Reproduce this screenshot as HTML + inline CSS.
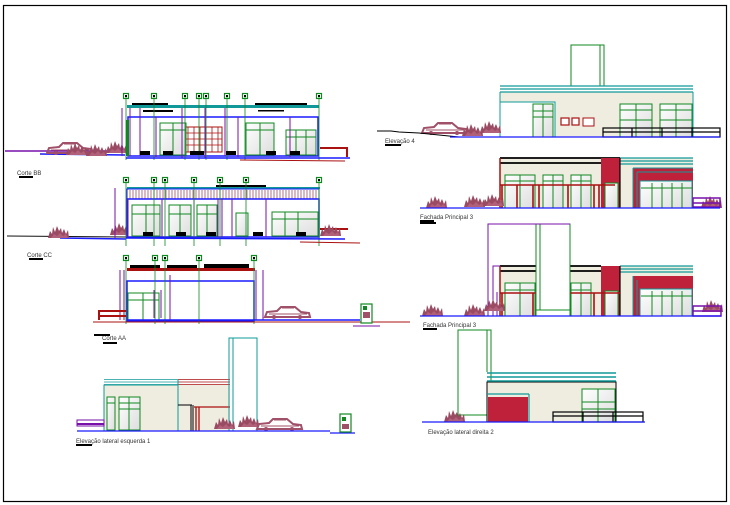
<!DOCTYPE html>
<html><head><meta charset="utf-8"><style>
html,body{margin:0;padding:0;background:#fff;width:730px;height:505px;overflow:hidden}
svg{display:block}
text{font-family:"Liberation Sans",sans-serif;font-size:6px;fill:#333}
</style></head><body>
<svg width="730" height="505" viewBox="0 0 730 505" xmlns="http://www.w3.org/2000/svg">
<defs>
<linearGradient id="g" x1="0" y1="0" x2="1" y2="1"><stop offset="0" stop-color="#fff"/><stop offset="1" stop-color="#ddd"/></linearGradient>
<g id="shrub"><path d="M-2 12 L0 5 L2 8 L3 1 L5 6 L7 0 L9 5 L11 2 L12 7 L14 3 L16 8 L18 4 L19 12 Z" fill="#9a4a62"/><path d="M1 12 L4 8 L7 10 L10 7 L13 10 L16 8 L18 12Z" fill="#b06078"/></g>
<g id="car"><path d="M0 12 L2 7 L12 6 L16 2 L30 2 L36 7 L44 8 L45 12 Z" fill="none" stroke="#a05068" stroke-width="2"/><path d="M17 3h12M4 9h38" stroke="#a05068"/><circle cx="9" cy="12" r="2" fill="#a05068"/><circle cx="35" cy="12" r="2" fill="#a05068"/></g>
<g id="axis"><rect x="-2.5" y="-2.5" width="5" height="5" fill="none" stroke="#118822" stroke-width="1.2"/><rect x="-1" y="-1" width="2" height="2" fill="#000"/></g>
</defs>
<rect x="3.5" y="5.5" width="723" height="496" fill="none" stroke="#000" stroke-width="1.2"/>

<!-- ========== Corte BB ========== -->
<g>
<line x1="5" y1="151" x2="125" y2="151" stroke="#7711aa" stroke-width="1.5"/>
<line x1="40" y1="154" x2="125" y2="155" stroke="#1a1aff" stroke-width="1.5"/>
<use href="#car" x="47" y="141"/>
<use href="#shrub" x="68" y="143"/><use href="#shrub" x="88" y="144"/><use href="#shrub" x="108" y="141"/>
<rect x="127" y="105" width="192" height="3" fill="#119999"/>
<rect x="128" y="117" width="190" height="39" fill="#fff" stroke="#1a1aff" stroke-width="1.5"/>
<rect x="132" y="103" width="36" height="2" fill="#000"/><rect x="255" y="103" width="52" height="2" fill="#000"/>
<rect x="143" y="110" width="30" height="2" fill="#000"/><rect x="258" y="110" width="26" height="1.5" fill="#000"/>
<rect x="186" y="127" width="36" height="25" fill="#fff" stroke="#aa1111" stroke-width="1"/>
<path d="M188 127v25M194 127v25M200 127v25M206 127v25M212 127v25M218 127v25M186 133h36M186 139h36M186 145h36" stroke="#aa1111" stroke-width="0.8"/>
<rect x="160" y="123" width="26" height="32" fill="url(#g)" stroke="#118822"/>
<path d="M173 123v32M160 130h26" stroke="#118822"/>
<rect x="246" y="123" width="28" height="32" fill="url(#g)" stroke="#118822"/>
<rect x="286" y="130" width="30" height="25" fill="url(#g)" stroke="#118822"/>
<path d="M260 123v32M246 130h28M296 130v25M306 130v25M286 137h30" stroke="#118822"/>
<rect x="126" y="120" width="3" height="36" fill="#118822"/>
<path d="M122 108v48M130 108v48M140 108v48M156 117v40M182 108v50M205 108v50M225 108v48M238 117v40M290 117v40" stroke="#7711aa" stroke-width="1"/>
<path d="M126 96v64M154 96v64M185 96v64M199 96v64M206 96v64M227 96v64M245 96v64M319 96v64" stroke="#118822" stroke-width="0.8"/>
<use href="#axis" x="126" y="96"/><use href="#axis" x="154" y="96"/><use href="#axis" x="185" y="96"/><use href="#axis" x="199" y="96"/><use href="#axis" x="206" y="96"/><use href="#axis" x="227" y="96"/><use href="#axis" x="245" y="96"/><use href="#axis" x="319" y="96"/>
<rect x="320" y="147" width="28" height="2" fill="#aa1111"/><rect x="346" y="147" width="2" height="10" fill="#aa1111"/>
<line x1="126" y1="158" x2="350" y2="158" stroke="#1a1aff" stroke-width="1.5"/>
<line x1="240" y1="160" x2="345" y2="161" stroke="#aa1111" stroke-width="1"/>
<rect x="140" y="151" width="10" height="4" fill="#000"/><rect x="163" y="151" width="10" height="4" fill="#000"/><rect x="190" y="151" width="14" height="4" fill="#000"/><rect x="226" y="151" width="10" height="4" fill="#000"/><rect x="266" y="151" width="10" height="4" fill="#000"/><rect x="290" y="151" width="10" height="4" fill="#000"/>
<text x="17" y="175">Corte BB</text><rect x="19" y="176" width="14" height="2" fill="#000"/>
</g>

<!-- ========== Corte CC ========== -->
<g>
<line x1="7" y1="236" x2="126" y2="237" stroke="#111" stroke-width="1"/>
<line x1="60" y1="238" x2="126" y2="239" stroke="#1a1aff" stroke-width="1.5"/>
<use href="#shrub" x="50" y="226"/><use href="#shrub" x="112" y="223"/>
<rect x="127" y="187" width="193" height="2" fill="#119999"/>
<rect x="127" y="189" width="192" height="10" fill="#fff" stroke="#1a1aff"/>
<g stroke="#a05068" stroke-width="0.8"><path d="M130 190v9M133 190v9M136 190v9M139 190v9M142 190v9M145 190v9M148 190v9M151 190v9M154 190v9M157 190v9M160 190v9M163 190v9M166 190v9M169 190v9M172 190v9M175 190v9M178 190v9M181 190v9M184 190v9M187 190v9M190 190v9M193 190v9M196 190v9M199 190v9M202 190v9M205 190v9M208 190v9M211 190v9M214 190v9M217 190v9M220 190v9M223 190v9M226 190v9M229 190v9M232 190v9M235 190v9M238 190v9M241 190v9M244 190v9M247 190v9M250 190v9M253 190v9M256 190v9M259 190v9M262 190v9M265 190v9M268 190v9M271 190v9M274 190v9M277 190v9M280 190v9M283 190v9M286 190v9M289 190v9M292 190v9M295 190v9M298 190v9M301 190v9M304 190v9M307 190v9M310 190v9M313 190v9M316 190v9"/></g>
<rect x="216" y="185" width="50" height="2" fill="#000"/>
<rect x="127" y="199" width="192" height="38" fill="#fff" stroke="#1a1aff" stroke-width="1.5"/>
<rect x="132" y="205" width="28" height="31" fill="url(#g)" stroke="#118822"/><rect x="169" y="205" width="22" height="31" fill="url(#g)" stroke="#118822"/><rect x="197" y="205" width="20" height="31" fill="url(#g)" stroke="#118822"/>
<rect x="236" y="213" width="12" height="23" fill="url(#g)" stroke="#118822"/><rect x="272" y="212" width="46" height="24" fill="url(#g)" stroke="#118822"/>
<path d="M146 205v31M132 214h28M180 205v31M169 214h22M207 205v31M197 214h20M285 212v24M298 212v24M272 219h46" stroke="#118822"/>
<path d="M115 188v50M128 199v38M162 199v38M194 199v38M218 199v38M222 199v38M232 199v38M266 199v38" stroke="#7711aa"/>
<path d="M126 180v66M154 180v66M165 180v66M194 180v66M220 180v66M246 180v66M319 180v66" stroke="#118822" stroke-width="0.8"/>
<use href="#axis" x="126" y="180"/><use href="#axis" x="154" y="180"/><use href="#axis" x="165" y="180"/><use href="#axis" x="194" y="180"/><use href="#axis" x="220" y="180"/><use href="#axis" x="246" y="180"/><use href="#axis" x="319" y="180"/>
<rect x="320" y="228" width="28" height="2" fill="#aa1111"/><use href="#shrub" x="322" y="224"/>
<line x1="126" y1="238" x2="345" y2="239" stroke="#1a1aff" stroke-width="1.5"/>
<line x1="300" y1="242" x2="360" y2="243" stroke="#aa1111"/>
<rect x="143" y="232" width="10" height="4" fill="#000"/><rect x="176" y="232" width="10" height="4" fill="#000"/><rect x="206" y="232" width="10" height="4" fill="#000"/><rect x="253" y="232" width="10" height="4" fill="#000"/><rect x="296" y="232" width="10" height="4" fill="#000"/>
<text x="27" y="257">Corte CC</text><rect x="29" y="258" width="14" height="2" fill="#000"/>
</g>

<!-- ========== Corte AA ========== -->
<g>
<rect x="127" y="268" width="128" height="3" fill="#aa1111"/>
<rect x="130" y="265" width="30" height="3" fill="#000"/><rect x="167" y="265" width="30" height="3" fill="#000"/><rect x="204" y="264" width="45" height="4" fill="#000"/>
<rect x="127" y="281" width="127" height="40" fill="#fff" stroke="#1a1aff" stroke-width="1.5"/>
<rect x="128" y="293" width="31" height="27" fill="none" stroke="#118822"/><path d="M143 293v27M128 300h31" stroke="#118822"/>
<path d="M120 270v50M124 270v50M170 275v45M256 270v50M263 270v50M154 290v28M161 290v28" stroke="#7711aa"/>
<path d="M126 258v66M155 258v66M165 258v66M199 258v66M254 258v66" stroke="#118822" stroke-width="0.8"/>
<use href="#axis" x="126" y="258"/><use href="#axis" x="155" y="258"/><use href="#axis" x="165" y="258"/><use href="#axis" x="199" y="258"/><use href="#axis" x="254" y="258"/>
<rect x="98" y="310" width="28" height="2" fill="#aa1111"/><rect x="98" y="310" width="2" height="10" fill="#aa1111"/><rect x="100" y="315" width="26" height="2" fill="#aa1111"/>
<line x1="93" y1="322" x2="410" y2="322" stroke="#aa1111"/>
<line x1="127" y1="320" x2="360" y2="320" stroke="#1a1aff" stroke-width="1.5"/>
<use href="#car" x="265" y="305"/>
<rect x="361" y="304" width="11" height="19" fill="#fff" stroke="#118822" stroke-width="1.2"/><rect x="363" y="312" width="7" height="6" fill="#a05068"/><rect x="363" y="306" width="4" height="4" fill="#118822"/>
<line x1="353" y1="326" x2="380" y2="326" stroke="#7711aa"/>
<text x="102" y="340">Corte AA</text><rect x="94" y="334" width="16" height="2" fill="#000"/><rect x="103" y="342" width="14" height="2" fill="#000"/>
</g>

<!-- ========== Elevação lateral esquerda 1 ========== -->
<g>
<rect x="104" y="385" width="74" height="46" fill="#efece0" stroke="#119999"/>
<rect x="178" y="385" width="52" height="46" fill="#efece0"/>
<path d="M104 379.5h74M104 382h74M104 384.5h74" stroke="#119999" stroke-width="0.8"/>
<path d="M178 379.5h52M178 382h52M178 384.5h52" stroke="#aa1111" stroke-width="0.8"/>
<line x1="178" y1="380" x2="178" y2="431" stroke="#119999"/>
<rect x="107" y="397" width="8" height="33" fill="url(#g)" stroke="#118822"/><rect x="119" y="397" width="21" height="33" fill="url(#g)" stroke="#118822"/>
<path d="M129 397v33M107 403h8M119 403h21M119 409h21" stroke="#118822"/>
<path d="M178 405h14M191 405v26M193 405v26" stroke="#000"/>
<path d="M194 407h36M196 407v24M199 407v24" stroke="#aa1111" stroke-width="1.3"/>
<rect x="229" y="338" width="28" height="93" fill="none" stroke="#119999"/><line x1="233" y1="338" x2="233" y2="431" stroke="#119999"/>
<use href="#shrub" x="216" y="417"/><use href="#shrub" x="240" y="415"/>
<use href="#car" x="257" y="417"/>
<rect x="77" y="420" width="27" height="6" fill="none" stroke="#7711aa"/><line x1="77" y1="424" x2="104" y2="424" stroke="#7711aa" stroke-width="2"/>
<line x1="77" y1="431" x2="330" y2="431" stroke="#1a1aff" stroke-width="1.3"/><line x1="330" y1="433" x2="355" y2="433" stroke="#1a1aff" stroke-width="1.3"/>
<rect x="340" y="414" width="11" height="18" fill="#fff" stroke="#118822" stroke-width="1.2"/><rect x="342" y="424" width="7" height="5" fill="#a05068"/><rect x="342" y="417" width="4" height="4" fill="#118822"/>
<text x="76" y="443">Elevação lateral esquerda 1</text><rect x="76" y="444" width="16" height="2" fill="#000"/>
</g>

<!-- ========== Elevação 4 ========== -->
<g>
<rect x="571" y="45" width="33" height="41" fill="#fff" stroke="#118822"/><line x1="600" y1="45" x2="600" y2="86" stroke="#118822"/>
<rect x="500" y="92" width="193" height="45" fill="#efece0"/>
<path d="M500 86h193M500 89h193M500 92h193" stroke="#119999" stroke-width="1.2"/>
<rect x="500" y="102" width="55" height="35" fill="#fff" stroke="#119999"/>
<line x1="500" y1="92" x2="500" y2="137" stroke="#119999"/><line x1="693" y1="92" x2="693" y2="137" stroke="#119999"/>
<rect x="533" y="104" width="20" height="33" fill="url(#g)" stroke="#118822"/><path d="M543 104v33M533 111h20M533 117h20" stroke="#118822"/>
<rect x="620" y="104" width="32" height="33" fill="url(#g)" stroke="#118822"/><rect x="660" y="104" width="32" height="33" fill="url(#g)" stroke="#118822"/>
<path d="M636 104v33M620 110h32M620 120h32M676 104v33M660 110h32M660 120h32" stroke="#118822"/>
<rect x="561" y="118" width="8" height="7" fill="#fff" stroke="#aa1111" stroke-width="1.2"/><rect x="572" y="118" width="7" height="7" fill="#fff" stroke="#aa1111" stroke-width="1.2"/><rect x="583" y="118" width="11" height="8" fill="#fff" stroke="#aa1111"/>
<rect x="603" y="128" width="117" height="9" fill="none" stroke="#000" stroke-width="1.2"/><path d="M603 132h117M632 128v9M662 128v9M692 128v9" stroke="#000" stroke-width="1.2"/>
<use href="#car" x="422" y="121"/>
<use href="#shrub" x="464" y="124"/><use href="#shrub" x="482" y="121"/>
<path d="M377 131h14l8 1l20 1l40 4" stroke="#000" fill="none"/>
<line x1="450" y1="137" x2="720" y2="137" stroke="#1a1aff" stroke-width="1.2"/>
<text x="385" y="143">Elevação 4</text><rect x="385" y="144" width="16" height="2" fill="#000"/>
</g>

<!-- ========== Fachada Principal 3 (top) ========== -->
<g>
<rect x="500" y="158" width="193" height="50" fill="#efece0"/>
<path d="M500 158h120M500 163h120" stroke="#000" stroke-width="1.8"/>
<path d="M620 158h73M620 161h73M620 164h73" stroke="#119999" stroke-width="1.2"/>
<rect x="601" y="158" width="19" height="50" fill="#c0213a"/>
<line x1="620" y1="158" x2="620" y2="208" stroke="#000" stroke-width="1.2"/>
<rect x="633" y="168" width="60" height="40" fill="#c0213a"/>
<path d="M633 168v40M637 172v36M633 168h60M637 172h56" stroke="#119999"/>
<rect x="640" y="181" width="52" height="27" fill="url(#g)" stroke="#119999"/>
<rect x="505" y="175" width="30" height="33" fill="url(#g)" stroke="#118822"/><rect x="543" y="175" width="20" height="33" fill="url(#g)" stroke="#118822"/><rect x="571" y="175" width="20" height="33" fill="url(#g)" stroke="#118822"/>
<path d="M520 175v33M505 181h30M553 175v33M543 181h20M581 175v33M571 181h20M652 183v25M662 183v25M672 183v25M682 183v25M641 188h51" stroke="#118822"/>
<rect x="605" y="183" width="13" height="25" fill="url(#g)" stroke="#118822"/>
<path d="M500 185h115M502 185v23M517 185v23M533 185v23M539 185v23M568 185v23M594 185v23M599 185v23" stroke="#aa1111" stroke-width="1.6"/>
<line x1="500" y1="158" x2="500" y2="208" stroke="#aa1111" stroke-width="1.5"/>
<use href="#shrub" x="428" y="196"/><use href="#shrub" x="466" y="195"/><use href="#shrub" x="485" y="194"/><use href="#shrub" x="703" y="196"/>
<rect x="693" y="198" width="27" height="9" fill="none" stroke="#7711aa" stroke-width="1.5"/><line x1="693" y1="203" x2="720" y2="203" stroke="#7711aa" stroke-width="1.5"/>
<line x1="420" y1="208" x2="720" y2="208" stroke="#1a1aff" stroke-width="1.2"/>
<text x="420" y="219">Fachada Principal 3</text><rect x="420" y="220" width="14" height="2" fill="#000"/>
</g>

<!-- ========== Fachada Principal 3 (second) ========== -->
<g>
<rect x="500" y="266" width="193" height="50" fill="#efece0"/>
<path d="M500 266h101M500 271h101" stroke="#000" stroke-width="1.8"/>
<rect x="601" y="266" width="19" height="50" fill="#c0213a"/>
<path d="M620 266h73M620 269h73M620 272h73" stroke="#119999" stroke-width="1.2"/>
<line x1="620" y1="266" x2="620" y2="316" stroke="#000" stroke-width="1.2"/>
<rect x="633" y="276" width="60" height="40" fill="#c0213a"/>
<path d="M633 276v40M637 280v36" stroke="#119999"/>
<rect x="640" y="289" width="52" height="27" fill="url(#g)" stroke="#119999"/>
<path d="M652 291v25M662 291v25M672 291v25M682 291v25M641 296h51" stroke="#118822"/>
<rect x="505" y="283" width="30" height="33" fill="url(#g)" stroke="#118822"/><rect x="571" y="283" width="20" height="33" fill="url(#g)" stroke="#118822"/>
<path d="M520 283v33M505 290h30M581 283v33M571 290h20" stroke="#118822"/>
<rect x="605" y="291" width="13" height="25" fill="url(#g)" stroke="#118822"/>
<path d="M500 293h120M502 293v23M533 293v23M594 293v23" stroke="#aa1111" stroke-width="1.6"/>
<line x1="500" y1="266" x2="500" y2="316" stroke="#aa1111" stroke-width="1.5"/>
<rect x="536" y="224" width="34" height="92" fill="#fff" stroke="#118822"/><line x1="540" y1="224" x2="540" y2="310" stroke="#118822"/><line x1="536" y1="310" x2="570" y2="310" stroke="#118822"/>
<path d="M488 316V224h82" fill="none" stroke="#7711aa" stroke-width="1"/>
<path d="M493 316V266h7M497 316V292" fill="none" stroke="#7711aa"/>
<use href="#shrub" x="424" y="304"/><use href="#shrub" x="466" y="304"/><use href="#shrub" x="486" y="299"/><use href="#shrub" x="704" y="300"/>
<rect x="693" y="306" width="28" height="10" fill="none" stroke="#7711aa" stroke-width="1.5"/><line x1="693" y1="311" x2="721" y2="311" stroke="#7711aa" stroke-width="1.5"/>
<line x1="420" y1="316" x2="721" y2="316" stroke="#1a1aff" stroke-width="1.2"/>
<rect x="420" y="222" width="16" height="2" fill="#000"/>
<text x="423" y="327">Fachada Principal 3</text><rect x="423" y="328" width="14" height="2" fill="#000"/>
</g>

<!-- ========== Elevação lateral direita 2 ========== -->
<g>
<rect x="458" y="330" width="33" height="92" fill="#fff" stroke="#118822"/><line x1="487" y1="330" x2="487" y2="372" stroke="#118822"/><line x1="458" y1="415" x2="487" y2="415" stroke="#118822"/>
<rect x="487" y="382" width="129" height="40" fill="#efece0" stroke="#000"/>
<path d="M487 373h129M487 377h129M487 381h129" stroke="#119999" stroke-width="1.5"/>
<rect x="488" y="397" width="40" height="25" fill="#c0213a"/>
<path d="M487 394h42M529 394v28" stroke="#119999" stroke-width="1.2"/>
<rect x="582" y="389" width="33" height="33" fill="url(#g)" stroke="#118822"/><path d="M598 389v33M582 402h33M582 409h33" stroke="#118822"/>
<rect x="553" y="412" width="90" height="10" fill="none" stroke="#000" stroke-width="1.2"/><path d="M553 416h90M583 412v10M613 412v10" stroke="#000" stroke-width="1.2"/>
<use href="#shrub" x="446" y="410"/>
<line x1="422" y1="422" x2="645" y2="422" stroke="#1a1aff" stroke-width="1.2"/>
<text x="428" y="434">Elevação lateral direita 2</text>
</g>
</svg>
</body></html>
